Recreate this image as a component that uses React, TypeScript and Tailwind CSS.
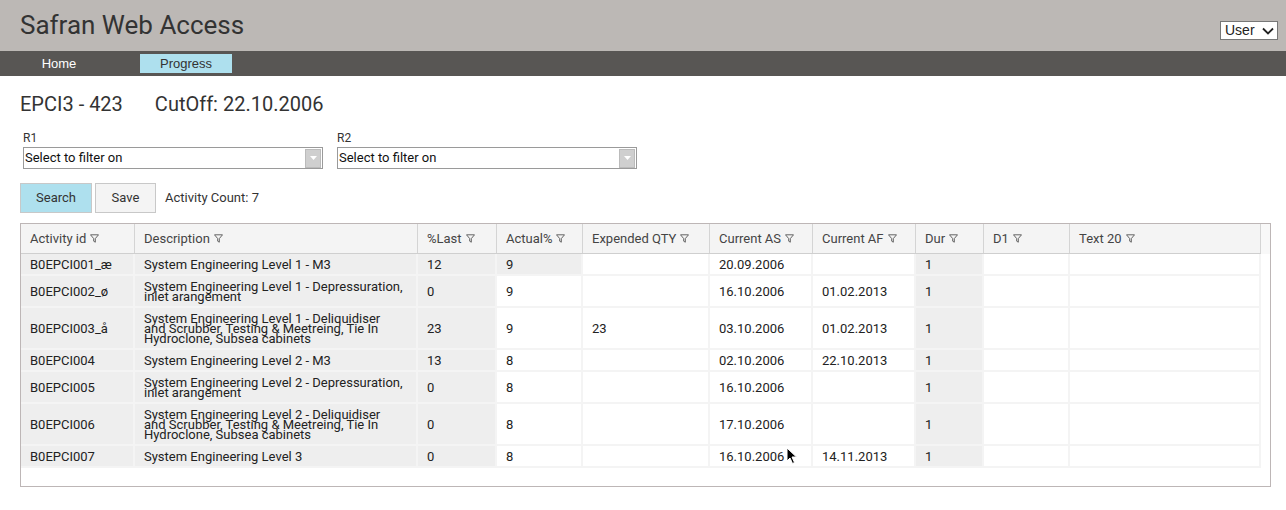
import React from "react";

const cols = [114, 283, 79, 86, 127, 103, 103, 68, 86, 191];
const gridCols =
  "grid grid-cols-[114px_283px_79px_86px_127px_103px_103px_68px_86px_191px]";
const headers = [
  "Activity id",
  "Description",
  "%Last",
  "Actual%",
  "Expended QTY",
  "Current AS",
  "Current AF",
  "Dur",
  "D1",
  "Text 20",
];

type Row = {
  id: string;
  desc: string[];
  last: string;
  actual: string;
  exp: string;
  as: string;
  af: string;
  dur: string;
};

const rows: Row[] = [
  { id: "B0EPCI001_æ", desc: ["System Engineering Level 1 - M3"], last: "12", actual: "9", exp: "", as: "20.09.2006", af: "", dur: "1" },
  { id: "B0EPCI002_ø", desc: ["System Engineering Level 1 - Depressuration,", "inlet arangement"], last: "0", actual: "9", exp: "", as: "16.10.2006", af: "01.02.2013", dur: "1" },
  { id: "B0EPCI003_å", desc: ["System Engineering Level 1 - Deliquidiser", "and Scrubber, Testing & Meetreing, Tie In", "Hydroclone, Subsea cabinets"], last: "23", actual: "9", exp: "23", as: "03.10.2006", af: "01.02.2013", dur: "1" },
  { id: "B0EPCI004", desc: ["System Engineering Level 2 - M3"], last: "13", actual: "8", exp: "", as: "02.10.2006", af: "22.10.2013", dur: "1" },
  { id: "B0EPCI005", desc: ["System Engineering Level 2 - Depressuration,", "inlet arangement"], last: "0", actual: "8", exp: "", as: "16.10.2006", af: "", dur: "1" },
  { id: "B0EPCI006", desc: ["System Engineering Level 2 - Deliquidiser", "and Scrubber, Testing & Meetreing, Tie In", "Hydroclone, Subsea cabinets"], last: "0", actual: "8", exp: "", as: "17.10.2006", af: "", dur: "1" },
  { id: "B0EPCI007", desc: ["System Engineering Level 3"], last: "0", actual: "8", exp: "", as: "16.10.2006", af: "14.11.2013", dur: "1" },
];

function Funnel() {
  return (
    <svg width="9" height="9" viewBox="0 0 9 9" className="ml-[4px] inline-block">
      <path
        d="M0.5 0.8 H8.5 L5.3 4.6 V8.2 L3.7 7.2 V4.6 Z"
        fill="none"
        stroke="#555"
        strokeWidth="0.9"
        strokeLinejoin="round"
      />
    </svg>
  );
}

function FilterSelect({ label }: { label: string }) {
  return (
    <div className="flex flex-col">
      <div className="text-[12px] leading-[14px] text-[#333]">{label}</div>
      <div className="mt-[2px] flex h-[22px] w-[300px] items-center border border-[#9a9a9a] bg-white">
        <div className="flex-1 pl-[1px] text-[13px] text-[#111]">Select to filter on</div>
        <div className="mr-[1px] flex h-[19px] w-[16px] items-center justify-center border border-[#bbb] bg-[#cfcfcf]">
          <svg width="7" height="4" viewBox="0 0 7 4">
            <path d="M0 0 H7 L3.5 4 Z" fill="#fff" />
          </svg>
        </div>
      </div>
    </div>
  );
}

function Cell({
  children,
  gray,
}: {
  children?: React.ReactNode;
  gray?: boolean;
}) {
  return (
    <div
      className={`flex items-center border-b-2 border-r-2 border-[#f4f4f4] pb-[4px] pt-[6px] pl-[9px] text-[13px] leading-[10px] text-[#222] ${
        gray ? "bg-[#eeeeee]" : "bg-white"
      }`}
    >
      {children}
    </div>
  );
}

export default function App() {
  return (
    <div
      className="relative h-[510px] w-[1286px] overflow-hidden bg-white"
      style={{ fontFamily: "Roboto, 'Liberation Sans', sans-serif" }}
    >
      {/* Header */}
      <div className="flex h-[51px] items-start justify-between bg-[#bcb8b5]">
        <div className="pl-5 pt-[9px] text-[26px] leading-[32px] text-[#333]">
          Safran Web Access
        </div>
        <div
          className="mr-[8px] mt-[21px] flex h-[19px] w-[58px] items-center justify-between border border-[#777] bg-white pl-[4px] pr-[3px] text-[14px] text-[#222]"
          style={{ fontFamily: "'Liberation Sans', Arial, sans-serif" }}
        >
          <span>User</span>
          <svg width="12" height="8" viewBox="0 0 12 8">
            <path d="M1 1.5 L6 6.5 L11 1.5" fill="none" stroke="#222" strokeWidth="1.8" />
          </svg>
        </div>
      </div>

      {/* Nav */}
      <div
        className="flex h-[25px] items-center bg-[#585654] text-[13px]"
        style={{ fontFamily: "'Liberation Sans', Arial, sans-serif" }}
      >
        <div className="ml-[13px] w-[92px] text-center text-white">Home</div>
        <div className="ml-[35px] flex h-[19px] w-[92px] items-center justify-center bg-[#aee0ee] text-[#333]">
          Progress
        </div>
      </div>

      {/* Content */}
      <div className="px-5">
        <div className="mt-[16px] flex text-[20px] leading-[24px] text-[#333]">
          <span>EPCI3 - 423</span>
          <span className="ml-[32px]">CutOff: 22.10.2006</span>
        </div>

        <div className="mt-[15px] flex gap-[14px] pl-[3px]">
          <FilterSelect label="R1" />
          <FilterSelect label="R2" />
        </div>

        <div className="mt-[14px] flex items-center text-[13px] text-[#333]">
          <div className="flex h-[30px] w-[72px] items-center justify-center border border-[#c8c8c8] bg-[#aee0ee]">
            Search
          </div>
          <div className="ml-[3px] flex h-[30px] w-[61px] items-center justify-center border border-[#c8c8c8] bg-[#f4f4f4]">
            Save
          </div>
          <div className="ml-[9px]">Activity Count: 7</div>
        </div>

        {/* Table */}
        <div className="mt-[10px] h-[264px] w-[1251px] border border-[#bdb6b6] bg-white">
          <div className="flex h-[30px] bg-[#f8f8f8]">
            <div className={`${gridCols} h-[30px] border-b border-[#cfcfcf] bg-[#f4f4f4]`}>
              {headers.map((h) => (
                <div
                  key={h}
                  className="flex items-center border-r border-[#d4d4d4] pl-[9px] text-[13px] text-[#444]"
                >
                  {h}
                  <Funnel />
                </div>
              ))}
            </div>
          </div>
          <div className={gridCols} style={{ width: cols.reduce((a, b) => a + b, 0) }}>
            {rows.map((r, ri) => (
              <React.Fragment key={r.id}>
                <Cell gray>{r.id}</Cell>
                <Cell gray>
                  <div className="whitespace-nowrap">
                    {r.desc.map((l, li) => (
                      <div key={li}>{l}</div>
                    ))}
                  </div>
                </Cell>
                <Cell gray>{r.last}</Cell>
                <Cell gray={ri === 0}>{r.actual}</Cell>
                <Cell>{r.exp}</Cell>
                <Cell>{r.as}</Cell>
                <Cell>{r.af}</Cell>
                <Cell gray>{r.dur}</Cell>
                <Cell />
                <Cell />
              </React.Fragment>
            ))}
          </div>
        </div>
      </div>

      {/* Mouse cursor */}
      <svg
        className="absolute left-[786px] top-[447px]"
        width="12"
        height="18"
        viewBox="0 0 12 18"
      >
        <path
          d="M1 1 L1 14 L4 11 L6.5 16.5 L8.5 15.5 L6 10 L10.5 10 Z"
          fill="#000"
          stroke="#fff"
          strokeWidth="1"
        />
      </svg>
    </div>
  );
}
